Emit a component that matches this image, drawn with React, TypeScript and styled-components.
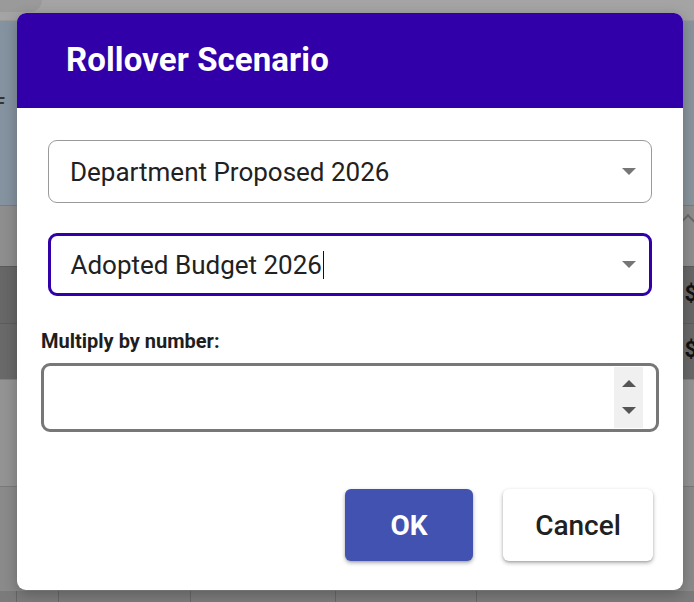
import styled, { createGlobalStyle } from 'styled-components'

const Global = createGlobalStyle`
  html, body {
    margin: 0;
    padding: 0;
    width: 694px;
    height: 602px;
    overflow: hidden;
    font-family: 'Roboto', 'Liberation Sans', sans-serif;
  }
`

const Page = styled.div`
  position: relative;
  width: 694px;
  height: 602px;
  display: flex;
  flex-direction: column;
  overflow: hidden;
`

const TopBar = styled.div`
  height: 20px;
  background: #a4a4a4;
  border-bottom: 1px solid #9a9a9a;
  display: flex;
`

const Blob = styled.div`
  width: 42px;
  height: 12px;
  background: #9a9a9a;
  border-bottom-right-radius: 14px;
`

const Banner = styled.div`
  height: 184px;
  background: linear-gradient(90deg, #8592a0, #8a949c);
  display: flex;
  align-items: center;
  font-weight: 700;
  font-size: 16px;
  color: #333;
  padding-top: 2px;
  box-sizing: border-box;
`

const BannerMark = styled.span`
  margin-left: -4px;
  margin-top: -22px;
`

const Row = styled.div<{ h: number; tone: string }>`
  height: ${(p) => p.h}px;
  background: ${(p) => p.tone};
  border-top: 1px solid rgba(0, 0, 0, 0.12);
  box-sizing: border-box;
  display: flex;
  align-items: center;
  justify-content: flex-end;
  font-weight: 700;
  font-size: 22px;
  color: #111;
`

const Chevron = styled.span`
  width: 8px;
  height: 8px;
  border-left: 2px solid #6a6a6a;
  border-top: 2px solid #6a6a6a;
  transform: rotate(45deg);
  margin-right: 1px;
  margin-top: -30px;
`

const Dollar = styled.span`
  margin-right: -3px;
  margin-top: -4px;
`

const Footer = styled.div`
  flex: 1;
  background: #7b7b7b;
  display: grid;
  grid-template-columns: 17px 42px 132px 145px 141px 1fr;
`

const FooterCell = styled.div`
  border-right: 1px solid #666;
`

const Dialog = styled.div`
  position: absolute;
  left: 17px;
  top: 13px;
  width: 666px;
  height: 577px;
  background: #ffffff;
  border-radius: 9px;
  overflow: hidden;
  display: flex;
  flex-direction: column;
  box-shadow: 0 4px 14px rgba(0, 0, 0, 0.25);
`

const Header = styled.div`
  height: 95px;
  flex-shrink: 0;
  background: #3100a9;
  display: flex;
  align-items: center;
  padding-left: 49px;
  padding-bottom: 2px;
  box-sizing: border-box;
`

const Title = styled.h2`
  margin: 0;
  color: #ffffff;
  font-size: 33px;
  font-weight: 700;
  letter-spacing: 0.1px;
`

const Body = styled.div`
  flex: 1;
  display: flex;
  flex-direction: column;
  padding: 32px 24px 29px 24px;
`

const Select = styled.div<{ focused?: boolean }>`
  margin: 0 7px;
  height: 63px;
  box-sizing: border-box;
  border: ${(p) => (p.focused ? '3px solid #3100a9' : '1.5px solid #9a9a9a')};
  border-radius: 9px;
  display: flex;
  align-items: center;
  padding-left: ${(p) => (p.focused ? '19.5px' : '21px')};
  padding-right: ${(p) => (p.focused ? '13.5px' : '15px')};
  font-size: 26px;
  color: #212121;
  & + & {
    margin-top: 30px;
  }
`

const SelectText = styled.span`
  flex: 1;
  display: flex;
  align-items: center;
`

const Caret = styled.span`
  display: inline-block;
  width: 1.5px;
  height: 28px;
  background: #111;
  margin-left: 1px;
`

const Arrow = styled.span`
  width: 0;
  height: 0;
  border-left: 7.5px solid transparent;
  border-right: 7.5px solid transparent;
  border-top: 7.5px solid #767676;
`

const Label = styled.label`
  margin-top: 33px;
  font-size: 20px;
  font-weight: 700;
  color: #1e1e1e;
  line-height: 24px;
`

const NumberBox = styled.div`
  margin-top: 10px;
  height: 69px;
  box-sizing: border-box;
  border: 3px solid #777777;
  border-radius: 9px;
  display: flex;
  justify-content: flex-end;
  align-items: stretch;
  padding: 1px 13px 1px 0;
`

const Spinner = styled.div`
  width: 29px;
  background: #f0f0f0;
  display: flex;
  flex-direction: column;
  align-items: center;
  justify-content: space-between;
  padding: 13px 0 14px;
`

const Tri = styled.span<{ up?: boolean }>`
  width: 0;
  height: 0;
  border-left: 7px solid transparent;
  border-right: 7px solid transparent;
  ${(p) => (p.up ? 'border-bottom: 7px solid #555;' : 'border-top: 7px solid #555;')}
`

const Actions = styled.div`
  margin-top: auto;
  display: flex;
  justify-content: flex-end;
  gap: 30px;
  padding-right: 6px;
`

const Button = styled.button<{ primary?: boolean }>`
  height: 72px;
  width: ${(p) => (p.primary ? '128px' : '150px')};
  border: none;
  border-radius: 6px;
  background: ${(p) => (p.primary ? '#4252b0' : '#ffffff')};
  color: ${(p) => (p.primary ? '#ffffff' : '#212121')};
  font-family: 'Roboto', sans-serif;
  font-size: 28px;
  font-weight: ${(p) => (p.primary ? 700 : 500)};
  box-shadow: 0 2px 4px rgba(0, 0, 0, 0.3), 0 1px 2px rgba(0, 0, 0, 0.12);
  cursor: pointer;
`

export default function App() {
  return (
    <>
      <Global />
      <Page>
        <TopBar>
          <Blob />
        </TopBar>
        <Banner>
          <BannerMark>F</BannerMark>
        </Banner>
        <Row h={61} tone="#8e8e8e">
          <Chevron />
        </Row>
        <Row h={57} tone="#676767">
          <Dollar>$</Dollar>
        </Row>
        <Row h={56} tone="#696969">
          <Dollar>$</Dollar>
        </Row>
        <Row h={107} tone="#939393" />
        <Row h={105} tone="#8a8a8a" />
        <Footer>
          <FooterCell />
          <FooterCell />
          <FooterCell />
          <FooterCell />
          <FooterCell />
          <div />
        </Footer>

        <Dialog>
          <Header>
            <Title>Rollover Scenario</Title>
          </Header>
          <Body>
            <Select>
              <SelectText>Department Proposed 2026</SelectText>
              <Arrow />
            </Select>
            <Select focused>
              <SelectText>
                Adopted Budget 2026
                <Caret />
              </SelectText>
              <Arrow />
            </Select>
            <Label>Multiply by number:</Label>
            <NumberBox>
              <Spinner>
                <Tri up />
                <Tri />
              </Spinner>
            </NumberBox>
            <Actions>
              <Button primary>OK</Button>
              <Button>Cancel</Button>
            </Actions>
          </Body>
        </Dialog>
      </Page>
    </>
  )
}
